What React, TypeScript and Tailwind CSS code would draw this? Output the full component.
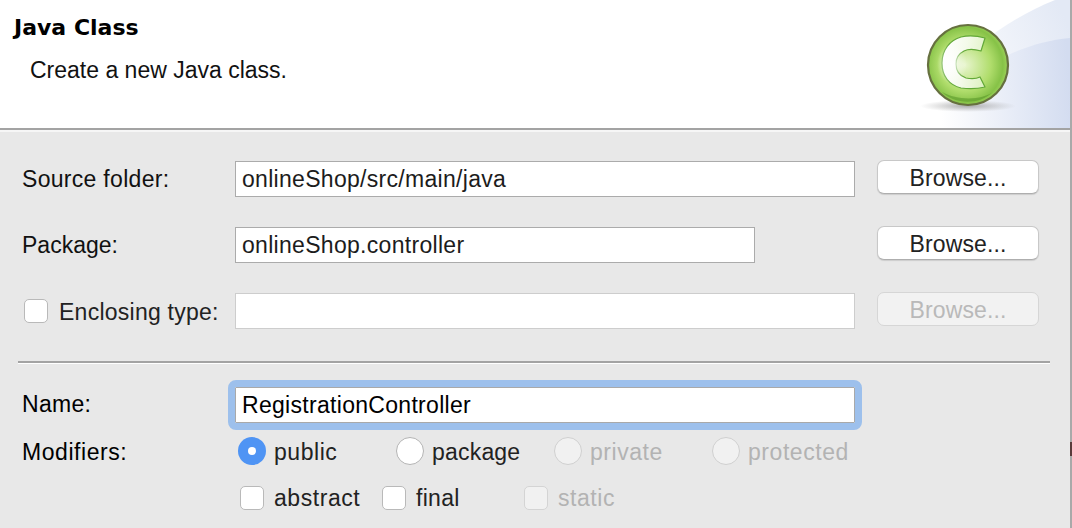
const bodyFont = "font-['Liberation_Sans',Arial,sans-serif]";

function ClassIcon() {
  return (
    <svg width="190" height="128" viewBox="0 0 190 128" className="absolute right-0 top-0">
      <defs>
        <linearGradient id="swoosh" gradientUnits="userSpaceOnUse" x1="60" y1="90" x2="190" y2="30">
          <stop offset="0" stopColor="#ffffff" />
          <stop offset="1" stopColor="#e3e9f5" />
        </linearGradient>
        <linearGradient id="swoosh2" gradientUnits="userSpaceOnUse" x1="60" y1="100" x2="190" y2="90">
          <stop offset="0" stopColor="#ffffff" />
          <stop offset="1" stopColor="#d3dcf0" />
        </linearGradient>
        <radialGradient id="ball" cx="0.46" cy="0.5" r="0.54">
          <stop offset="0" stopColor="#e8f5ce" />
          <stop offset="0.6" stopColor="#b0dd6c" />
          <stop offset="0.88" stopColor="#86c247" />
          <stop offset="1" stopColor="#9dd25a" />
        </radialGradient>
        <linearGradient id="letter" x1="0" y1="0.4" x2="1" y2="0.6">
          <stop offset="0" stopColor="#ffffff" />
          <stop offset="0.5" stopColor="#f4faea" />
          <stop offset="1" stopColor="#dff2c4" />
        </linearGradient>
        <radialGradient id="glow">
          <stop offset="0" stopColor="#ffffff" stopOpacity="0.9" />
          <stop offset="1" stopColor="#ffffff" stopOpacity="0" />
        </radialGradient>
        <radialGradient id="shade">
          <stop offset="0" stopColor="#8a8a8a" stopOpacity="0.7" />
          <stop offset="1" stopColor="#a0a0a0" stopOpacity="0" />
        </radialGradient>
      </defs>
      <path d="M40 128C44 90 100 30 175 0H190V128Z" fill="url(#swoosh)" />
      <path d="M128 55C148 46 168 40 190 38V128H40C44 100 90 75 128 55Z" fill="url(#swoosh2)" />
      <ellipse cx="88" cy="106" rx="48" ry="6" fill="url(#shade)" />
      <circle cx="88" cy="65" r="40" fill="url(#ball)" stroke="#66703f" strokeWidth="2.2" />
      <path d="M62 92C74 104 98 106 113 92C102 100 78 101 62 92Z" fill="#4f8f24" opacity="0.5" />
      <path
        d="M105 38L101 51C94 49 88 49 84 51C78 54 76 59 76 64C76 71 80 76 86 78C91 79 96 79 100 77L105 87C97 89 88 89 81 88C69 85 62 76 62 63C62 50 70 40 81 37C89 35 98 36 105 38Z"
        fill="url(#letter)"
        stroke="#62a838"
        strokeWidth="1.2"
        strokeLinejoin="round"
      />
      <ellipse cx="72" cy="64" rx="15" ry="20" fill="url(#glow)" />
    </svg>
  );
}

function TextBox({ value, width, disabled }: { value?: string; width: string; disabled?: boolean }) {
  return (
    <div
      className={`${width} h-[36px] bg-white border flex items-center pl-[6px] text-[#1c1c1c] ${
        disabled ? "border-[#cdcdcd]" : "border-[#ababab]"
      }`}
    >
      {value}
    </div>
  );
}

function BrowseButton({ disabled }: { disabled?: boolean }) {
  return (
    <div
      className={`w-[162px] h-[34px] pt-[2px] rounded-[7px] flex items-center justify-center border tracking-[0.15px] ${
        disabled
          ? "bg-[#f2f2f2] border-[#d6d6d6] text-[#b9b9b9]"
          : "bg-white border-[#c8c8c8] border-b-[#aeaeae] text-[#222222] shadow-[0_1px_1px_rgba(0,0,0,0.12)]"
      }`}
    >
      Browse...
    </div>
  );
}

function Check({ disabled }: { disabled?: boolean }) {
  return (
    <span
      className={`block w-[24px] h-[24px] rounded-[5px] border shrink-0 ${
        disabled ? "bg-[#f1f1f1] border-[#d4d4d4]" : "bg-white border-[#b9b9b9]"
      }`}
    />
  );
}

function Radio({ state }: { state?: "on" | "off" }) {
  if (state === "on") {
    return (
      <span className="w-[28px] h-[28px] rounded-full bg-[#4f94f4] flex items-center justify-center shrink-0">
        <span className="w-[8px] h-[8px] rounded-full bg-white" />
      </span>
    );
  }
  return (
    <span
      className={`w-[28px] h-[28px] rounded-full border shrink-0 ${
        state === "off" ? "bg-white border-[#b4b4b4]" : "bg-[#f1f1f1] border-[#d0d0d0]"
      }`}
    />
  );
}

export default function App() {
  return (
    <div className={`${bodyFont} relative w-[1072px] h-[528px] bg-[#e8e8e8] flex flex-col border-r-2 border-r-[#a9a9a9] text-[23px] tracking-[0.3px] text-[#111111]`}>
      <header className="relative h-[128px] bg-white shrink-0 pt-[13px] pl-[14px]">
        <div className="relative z-10 font-['DejaVu_Sans',sans-serif] font-bold text-[22px] tracking-normal leading-[30px] text-black">Java Class</div>
        <div className="relative z-10 pl-[16px] mt-[13px] leading-[28px] tracking-normal text-[#111111]">Create a new Java class.</div>
        <ClassIcon />
      </header>
      <div className="h-[2px] bg-[#a3a3a3] shrink-0" />
      <div className="h-[2px] bg-[#f6f6f6] shrink-0" />

      <main className="flex-1 pt-[29px]">
        <div className="flex items-start h-[66px]">
          <label className="w-[235px] pl-[22px] h-[36px] flex items-center">Source folder:</label>
          <TextBox value="onlineShop/src/main/java" width="w-[620px]" />
          <div className="ml-[22px] -mt-[1px]"><BrowseButton /></div>
        </div>
        <div className="flex items-start h-[66px]">
          <label className="w-[235px] pl-[22px] h-[36px] flex items-center tracking-normal">Package:</label>
          <TextBox value="onlineShop.controller" width="w-[520px]" />
          <div className="ml-[122px] -mt-[1px]"><BrowseButton /></div>
        </div>
        <div className="flex items-start h-[68px]">
          <label className="w-[235px] pl-[24px] pt-[2px] h-[36px] flex items-center gap-[11px] text-[#222222] tracking-[0.25px]">
            <span className="block shrink-0 -mt-[2px]"><Check /></span>
            Enclosing type:
          </label>
          <TextBox width="w-[620px]" disabled />
          <div className="ml-[22px] -mt-[1px]"><BrowseButton disabled /></div>
        </div>

        <div className="ml-[18px] w-[1032px] h-[2px] bg-[#a3a3a3]" />
        <div className="ml-[18px] w-[1032px] h-[1px] bg-white" />

        <div className="flex items-start mt-[23px]">
          <label className="w-[235px] pl-[22px] h-[34px] flex items-center text-black">Name:</label>
          <div className="w-[620px] h-[36px] bg-white border border-[#a9a9a9] flex items-center pl-[6px] text-black rounded-[1px] outline-[7px] outline-solid outline-[#9dc0ec]">
            RegistrationController
          </div>
        </div>

        <div className="flex items-center mt-[14px] h-[28px] tracking-[0.55px]">
          <label className="w-[238px] pl-[22px] pt-[3px] text-black">Modifiers:</label>
          <div className="flex items-center w-[158px] gap-[8px] text-[#222222]"><Radio state="on" /><span className="pt-[3px]">public</span></div>
          <div className="flex items-center w-[158px] gap-[8px] text-[#222222] tracking-[0.2px]"><Radio state="off" /><span className="pt-[3px]">package</span></div>
          <div className="flex items-center w-[158px] gap-[8px] text-[#b3b3b3]"><Radio /><span className="pt-[3px]">private</span></div>
          <div className="flex items-center gap-[8px] text-[#b3b3b3]"><Radio /><span className="pt-[3px]">protected</span></div>
        </div>

        <div className="flex items-center mt-[19px] h-[28px] pl-[240px] tracking-[0.55px]">
          <div className="flex items-center w-[142px] gap-[10px] text-[#222222]"><Check />abstract</div>
          <div className="flex items-center w-[142px] gap-[10px] text-[#222222] tracking-[0.3px]"><Check />final</div>
          <div className="flex items-center gap-[10px] text-[#b3b3b3]"><Check disabled />static</div>
        </div>
      </main>
      <span className="absolute right-[-2px] top-[442px] w-[2px] h-[14px] bg-[#5a3b3b]" />
    </div>
  );
}
